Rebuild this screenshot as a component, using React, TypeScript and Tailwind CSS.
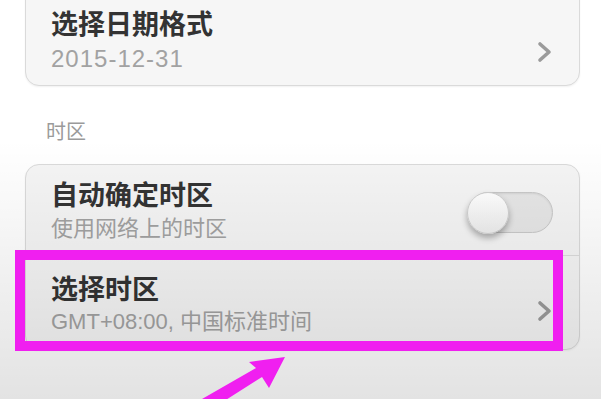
import { ReactNode } from 'react';

const font = "font-['Liberation_Sans','Noto_Sans_CJK_SC',sans-serif]";

function Chevron() {
  return (
    <svg width="16" height="22" viewBox="0 0 16 22" className="shrink-0">
      <polyline points="3,3 12,11 3,19" fill="none" stroke="#9b9b9b" strokeWidth="3.6" strokeLinecap="round" strokeLinejoin="round" />
    </svg>
  );
}

function Toggle() {
  return (
    <div className="relative w-[85px] h-[41px] rounded-full border border-[#c9c9c9] bg-[#e6e6e6] shadow-[inset_0_1px_2px_rgba(0,0,0,0.08)]">
      <div className="absolute left-[-2px] top-[-1px] w-[42px] h-[42px] rounded-full border border-[#cfcfcf] bg-linear-to-b from-white to-[#ececec] shadow-[0_4px_6px_rgba(0,0,0,0.3)]" />
    </div>
  );
}

function Row({ title, sub, subClass, right, className }: { title: string; sub: string; subClass: string; right: ReactNode; className: string }) {
  return (
    <div className={`flex justify-between pl-[25px] pr-[26px] ${className}`}>
      <div className="flex flex-col">
        <span className="text-[27px] leading-[34px] font-semibold text-[#333]">{title}</span>
        <span className={`text-[#a2a2a2] ${subClass}`}>{sub}</span>
      </div>
      {right}
    </div>
  );
}

export default function App() {
  return (
    <div className={`relative w-[601px] h-[399px] overflow-hidden bg-white ${font}`}>
      <div className="flex flex-col">
        <div className="mt-[-14px] ml-[25px] mr-[21px] h-[100px] rounded-[14px] border border-[#dadada] bg-[#f6f6f6] shadow-[0_1px_2px_rgba(0,0,0,0.06)]">
          <Row
            title="选择日期格式"
            sub="2015-12-31"
            subClass="text-[24px] leading-[34px] tracking-[1px]"
            right={<div className="self-center mb-[-20px]"><Chevron /></div>}
            className="pt-[21px]"
          />
        </div>

        <div className="mt-[32px] pl-[46px] text-[20px] leading-[28px] text-[#9a9a9a]">时区</div>

        <div className="mt-[18px] ml-[25px] mr-[21px] h-[186px] rounded-[14px] border border-[#dadada] bg-[#f5f5f5] shadow-[0_1px_2px_rgba(0,0,0,0.06)] flex flex-col">
          <Row
            title="自动确定时区"
            sub="使用网络上的时区"
            subClass="text-[22px] leading-[32px]"
            right={<div className="self-center mt-[-10px]"><Toggle /></div>}
            className="h-[91px] pt-[14px] border-b border-[#dcdcdc]"
          />
          <Row
            title="选择时区"
            sub="GMT+08:00, 中国标准时间"
            subClass="text-[22px] leading-[30px]"
            right={<div className="self-center"><Chevron /></div>}
            className="flex-1 pt-[17px]"
          />
        </div>
      </div>

      <div className="pointer-events-none absolute inset-0 bg-linear-to-b from-transparent from-35% to-black/[0.11]" />

      <div className="pointer-events-none absolute left-[15px] top-[250px] w-[548px] h-[101px] border-[10px] border-[#f01ff0]" />

      <svg className="pointer-events-none absolute inset-0" width="601" height="399" viewBox="0 0 601 399">
        <polygon points="285,357 249,362 256,368 202,399 210,410 262,377 269,388" fill="#f01ff0" />
      </svg>
    </div>
  );
}
